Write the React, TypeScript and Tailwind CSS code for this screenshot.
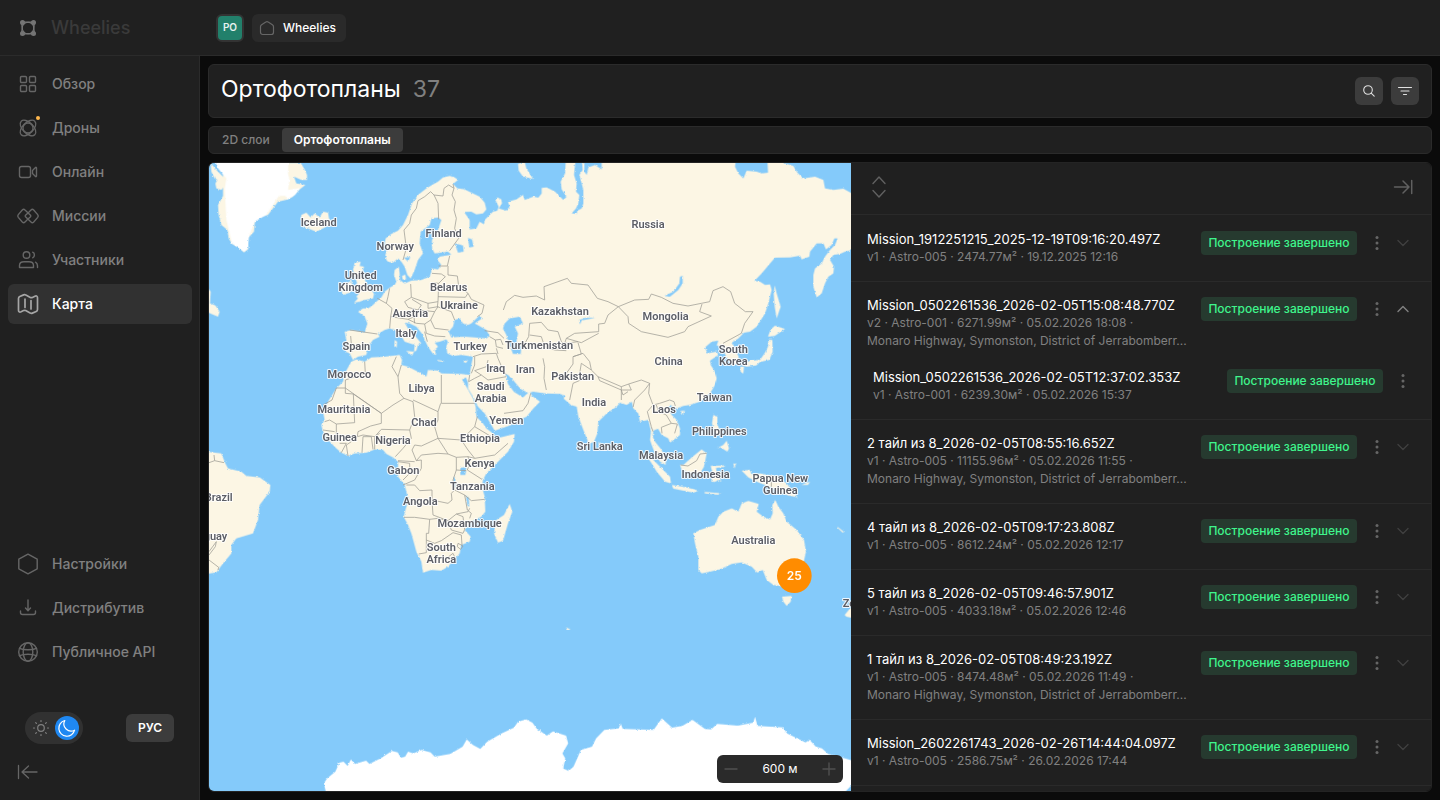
import { ReactNode, useState } from 'react';

/* ---------- icons ---------- */

function Icon({ size = 24, width = 1.4, children }: { size?: number; width?: number; children: ReactNode }) {
  return (
    <svg
      width={size}
      height={size}
      viewBox={`0 0 ${size} ${size}`}
      fill="none"
      stroke="currentColor"
      strokeWidth={width}
      strokeLinecap="round"
      strokeLinejoin="round"
      className="shrink-0"
      aria-hidden="true"
    >
      {children}
    </svg>
  );
}

const icons = {
  overview: (
    <Icon>
      <rect x="4.500" y="4.500" width="6" height="6" rx="1" />
      <rect x="13.500" y="4.500" width="6" height="6" rx="1" />
      <rect x="4.500" y="13.500" width="6" height="6" rx="1" />
      <rect x="13.500" y="13.500" width="6" height="6" rx="1" />
    </Icon>
  ),
  drones: (
    <Icon width={1.3}>
      <circle cx="12" cy="12" r="5" />
      <ellipse cx="12" cy="12" rx="9.600" ry="5.400" transform="rotate(45 12 12)" />
      <ellipse cx="12" cy="12" rx="9.600" ry="5.400" transform="rotate(-45 12 12)" />
    </Icon>
  ),
  online: (
    <Icon>
      <rect x="3.500" y="6.500" width="11" height="11" rx="2" />
      <path d="M16.500 10.500l3-3c.4-.4 1-.1 1 .4v8.200c0 .5-.6.8-1 .4l-3-3z" />
    </Icon>
  ),
  missions: (
    <Icon>
      <path d="M12 9l3-3c1-1 1.700-1 2.700 0l4 4.600c.8 1 .8 1.800 0 2.800l-4 4.600c-1 1-1.700 1-2.700 0l-5.500-5.200c-.5-.6-.5-1 0-1.600L12 9z" />
      <path d="M12 15l-3 3c-1 1-1.700 1-2.700 0l-4-4.600c-.8-1-.8-1.800 0-2.800L6.300 6c1-1 1.700-1 2.700 0l5.500 5.200c.5.6.5 1 0 1.600L12 15z" />
    </Icon>
  ),
  members: (
    <Icon>
      <circle cx="10.500" cy="7" r="3.300" />
      <path d="M3.500 19.500v-2c0-2.500 2-3.700 4.500-3.700h5c2.500 0 4.500 1.200 4.500 3.700v2z" />
      <path d="M16.700 4.200c2.300 1 2.300 4.600 0 5.600M19.500 14.200c1.400.7 2 2 2 3.600v1.700" />
    </Icon>
  ),
  map: (
    <Icon width={1.7}>
      <path d="M2.500 6.500c0-1 .4-1.600 1.300-2L7.600 2.900c.9-.4 1.500-.3 2.300.2l4.400 2.300c.8.4 1.300.4 2.100 0l2.500-1.200c1.600-.7 2.600 0 2.600 1.500v11.800c0 1-.4 1.600-1.300 2l-3.800 1.600c-.9.4-1.500.3-2.300-.2L9.700 18.600c-.8-.4-1.300-.4-2.100 0l-2.500 1.200c-1.600.7-2.600 0-2.600-1.500z" />
      <path d="M9 7v8.500M15 8.500V17" />
    </Icon>
  ),
  settings: (
    <Icon>
      <path d="M12 2.200l9.200 5v9.600l-9.200 5-9.200-5V7.200z" />
    </Icon>
  ),
  download: (
    <Icon>
      <path d="M12 4v10M9.500 12l2.500 2.700 2.500-2.700" />
      <path d="M4.500 15v1.500a2 2 0 0 0 2 2h11a2 2 0 0 0 2-2V15" />
    </Icon>
  ),
  globe: (
    <Icon>
      <circle cx="12" cy="12" r="9.300" />
      <ellipse cx="12" cy="12" rx="4.800" ry="9.300" />
      <path d="M3.500 8.300c4.500 2 12.500 2 17 0M3.500 15.700c4.500-2 12.500-2 17 0" />
    </Icon>
  ),
};

/* ---------- map ---------- */

const eurafrica =
  'M535 300L532 285 538 268 530 250 533 235 550 222 570 212 585 195 600 165 612 130 630 105 655 85 680 70 690 65 705 52 725 48 740 52 750 60 735 72 748 85 770 88 790 98 815 110 830 128 835 148 825 160 805 163 790 155 768 156 785 180 785 208 805 205 815 185 828 193 830 180 845 165 855 155 868 152 872 140 862 120 868 112 880 118 882 130 872 145 895 152 905 140 900 125 925 118 945 105 950 120 976 110 991 113 1001 100 1001 84 1016 82 1041 95 1066 120 1076 110 1061 88 1058 65 1071 40 1074 -10' +
  'L1710 -10 1726 9 1756 18 1768 38 1786 55 1821 50 1846 60 1851 85 1876 90 1906 86 1940 105 1940 268 1911 275 1896 282 1876 285 1866 300 1878 320 1876 340 1861 350 1851 370 1841 400 1826 412 1816 380 1816 345 1821 325 1841 310 1851 290 1866 270 1881 255 1889 235 1879 235 1871 255 1854 268 1846 250 1826 250 1806 275 1804 290 1781 298 1776 287 1746 292 1701 293 1686 310 1661 340 1639 363 1656 365 1671 375 1686 373 1691 390 1681 430 1671 460 1646 500 1626 515 1608 518 1591 535 1571 548 1582 570 1592 590 1590 610 1574 616 1560 600 1550 580 1545 562 1526 556 1531 542 1511 545 1491 562 1498 580 1526 575 1531 585 1506 602 1508 615 1521 635 1526 655' +
  'L1521 675 1506 700 1476 725 1446 735 1426 738 1406 745 1386 735 1380 745 1391 765 1406 780 1416 805 1416 825 1386 848 1381 835 1361 825 1350 806 1336 812 1334 830 1341 845 1361 870 1373 900 1373 915 1356 905 1341 880 1331 855 1326 840 1329 815 1321 780 1296 785 1291 760 1276 745 1271 725 1256 735 1236 728 1226 740 1196 760 1171 785 1168 820 1158 845 1143 852 1126 810 1111 770 1106 740 1088 735 1081 728 1066 715 1072 708 1056 702 1011 700 976 695 961 699 940 688 930 678 915 660 900 645 892 642 900 672 918 696 945 712 965 694 972 708 996 725 976 745 956 770 936 778 910 795 860 812 850 795 830 760 810 740 795 710 780 685 780 668 774 652' +
  'L762 658 775 680 795 715 803 740 805 770 825 790 835 805 855 820 865 835 920 822 918 845 900 875 870 905 835 940 825 960 822 980 830 1010 832 1055 820 1070 790 1085 770 1110 788 1130 785 1145 760 1155 755 1180 720 1220 700 1232 670 1230 645 1238 640 1205 625 1175 610 1120 600 1095 587 1070 595 1040 600 1015 590 975 570 950 570 905 555 892 535 882 525 870 500 868 475 878 440 880 420 888 400 878 385 865 365 845 345 815 340 795 350 780 345 755 360 725 385 685 405 665 410 640 430 605 445 598 470 605 490 592 530 590 575 585 582 600 580 615 600 620 640 640 655 650 660 630 690 632 700 640 760 642 785 645 790 615 795 590 760 585 735 588 718 580 715 560 720 545' +
  'L715 538 695 545 680 548 690 560 680 570 685 585 675 582 660 560 650 540 645 525 625 500 605 490 590 488 600 505 615 520 640 550 630 555 625 572 618 575 620 555 590 545 575 520 560 510 545 505 530 510 510 522 515 530 495 540 480 560 475 585 450 590 435 600 425 580 413 575 415 540 410 515 430 510 470 517 478 490 470 470 450 455 465 445 480 445 495 435 505 425 520 412 530 395 545 383 560 375 565 365 558 345 560 330 572 320 575 340 575 360 590 370 610 362 640 360 665 350 670 335 670 325 690 328 700 315 688 300 695 290 730 284 720 275 680 280 672 265 672 240 690 210 700 180 690 172 670 175 665 195 638 215 635 250 645 280 630 300 620 330 608 355 598 345 590 320 580 305 570 295 555 308 540 305Z';

const islands = [
  // greenland coast
  'M8 9L25 30 45 50 52 65 48 80 40 90 25 85 22 70 28 60 20 55 10 35Z',
  'M45 9V108L30 135 32 165 40 195 58 210 62 235 72 252 90 262 108 277 120 268 122 232 138 215 140 190 145 175 180 165 210 125 240 118 255 110 275 88 292 75 265 70 258 50 280 60 297 60 297 45 290 28 278 9Z',
  'M280 165L295 158 308 172 320 160 335 172 345 155 360 158 363 175 372 188 355 200 325 215 300 205 284 202 298 190 278 180Z',
  'M440 308L458 305 455 318 468 320 460 345 472 362 478 378 492 392 498 402 495 415 470 420 455 425 438 428 450 415 445 410 455 398 440 385 447 368 440 350 435 330Z',
  'M405 375L430 362 434 385 425 398 405 405 400 390Z',
  'M930 12L950 5 955 25 975 57 945 50 932 32Z',
  'M582 348L592 344 594 358 584 358Z',
  'M560 540L567 545 566 562 559 560Z',
  'M594 573L618 575 612 587Z',
  'M688 600L708 603 706 606 688 603Z',
  'M765 605L780 600 774 609Z',
  // south america and newfoundland
  'M-5 875L40 880 52 910 60 925 100 935 115 948 155 952 187 975 185 995 155 1035 150 1080 135 1120 110 1128 85 1135 70 1155 70 1180 45 1210 25 1237 -5 1242Z',
  'M-5 378L8 395 6 430 22 436 35 455 30 470 10 462 -5 455Z',
  'M905 1032L913 1055 900 1090 885 1142 870 1148 858 1120 865 1080 888 1065Z',
  // japan and sakhalin
  'M1700 376L1706 400 1718 440 1706 475 1700 440 1697 400Z',
  'M1701 497L1731 507 1711 520 1700 528 1680 530 1688 508Z',
  'M1681 540L1693 540 1694 575 1684 600 1656 606 1645 616 1616 620 1600 615 1626 602 1656 600 1671 578 1680 560Z',
  'M1597 620L1608 620 1606 640 1598 636Z',
  'M1599 626L1606 620 1604 642Z',
  // south-east asia
  'M1415 754L1431 751 1423 765Z',
  'M1516 765L1528 770 1528 795 1536 810 1546 825 1521 822 1512 790Z',
  'M1526 865L1546 855 1556 842 1563 865 1558 875 1538 862Z',
  'M1316 888L1336 900 1356 920 1386 950 1389 970 1371 965 1346 935 1331 910Z',
  'M1391 975L1436 982 1471 992 1456 998 1396 986Z',
  'M1490 996L1540 1000 1530 1004 1490 1000Z',
  'M1416 915L1426 915 1451 892 1481 868 1496 880 1488 920 1476 940 1446 938 1421 930Z',
  'M1508 918L1550 916 1550 920 1524 924 1526 936 1540 934 1532 944 1540 966 1530 960 1522 966 1510 965 1514 940Z',
  'M1576 910L1584 912 1580 925Z',
  'M1601 932L1626 930 1631 945 1656 940 1706 950 1736 970 1751 990 1769 1012 1736 1005 1706 990 1671 975 1646 965 1621 952Z',
  'M1780 975L1806 965 1800 975Z',
  'M1171 845L1181 855 1176 868Z',
  // australia and around
  'M1456 1120L1476 1110 1521 1095 1531 1070 1546 1055 1571 1045 1591 1055 1601 1030 1621 1023 1652 1032 1646 1055 1666 1070 1686 1078 1694 1060 1693 1035 1702 1020 1711 1040 1726 1060 1736 1085 1766 1110 1788 1140 1794 1175 1786 1210 1766 1250 1731 1280 1696 1275 1676 1260 1664 1230 1648 1238 1631 1220 1601 1207 1571 1212 1536 1228 1506 1235 1481 1240 1471 1230 1471 1190 1461 1150Z',
  'M1722 1310L1751 1308 1748 1325 1736 1338 1726 1325Z',
  'M1910 1365L1926 1345 1940 1335 1940 1375 1915 1370Z',
  'M1888 1100L1908 1116 1904 1118 1889 1104Z',
  'M1074 1402L1088 1408 1076 1409Z',
];

const waters = [
  'M1103 -5H1121L1124 30 1114 45 1121 70 1126 90 1126 130 1121 145 1108 152 1106 162 1091 160 1104 145 1111 130 1114 105 1104 95 1106 70 1098 45Z',
  'M1129 -5H1181V28L1161 15 1141 22 1136 45 1129 35Z',
  'M1584 -5H1678L1680 38 1661 40 1646 35 1616 32 1606 55 1591 40 1581 20Z',
  'M740 480L755 475 765 490 780 495 790 490 815 466 822 475 800 490 835 510 845 528 835 535 800 532 770 530 730 532 722 515 735 500Z',
  'M890 490L905 475 935 470 945 490 920 500 930 520 925 545 940 560 938 582 915 582 905 555 895 525 885 505Z',
  'M1424 348L1424 370 1411 390 1386 410 1369 408 1396 395 1414 370 1416 350Z',
  'M1161 474L1121 481 1116 493 1113 480 1136 473Z',
  'M740 250L765 256 767 275 750 278Z',
  'M780 234L792 238 797 260 784 262Z',
  'M588 293L607 291 600 305Z',
  'M757 924L775 921 772 945 757 945Z',
  'M774 1006L782 1012 784 1040 778 1036Z',
  'M736 950L742 955 742 985 738 980Z',
];

const borders = [
  // scandinavia and the baltics
  'M585 300L595 265 588 210 605 190 610 165 625 145 630 122 650 110 668 95 678 105 705 108 708 85 722 75 738 85 735 72',
  'M678 105L690 130 692 178',
  'M738 85L732 105 742 125 738 150 745 175 740 205 752 235 725 272',
  'M725 288L718 318 692 318M720 318L720 345M672 340L700 342 712 350 692 370 672 368M720 345L748 348 752 378 780 400 772 412 690 410',
  // europe
  'M608 372L610 412 590 425 600 442 630 450 640 435 612 418M610 412L660 430 690 425 692 370M660 430L660 445 690 440 680 455 630 450M545 385L540 410 535 430 552 445 548 470 600 478 620 470M508 415L535 430M548 470L545 505M428 528L432 575M425 510L508 522M690 425L688 440 730 455 740 480M680 455L668 480 680 505 722 510M780 400L790 418 828 435 822 460 808 470M600 478L625 490 650 492 655 520 680 528 712 530M620 490L618 470M650 492L668 480M650 515L658 545',
  // caucasus and kazakhstan
  'M830 512L870 518 888 535M845 530L862 540 878 538 885 555M862 540L865 560 885 565M886 450L895 425 920 406 945 412 985 408 1010 420 1008 380 1078 355 1090 370 1140 375 1168 415 1200 425 1231 440',
  'M1231 440L1200 465 1190 490 1172 492 1172 515 1100 520 1075 535M945 560L962 530 965 490 1000 487 1020 510 1050 515 1060 545 1080 560M965 525L1000 530 1010 560 1040 570 1075 572M1172 520L1120 548 1075 535 1070 550 1110 545M1110 548L1120 582 1095 590 1095 612 1075 640M1005 595L1010 620 1008 655 1015 690',
  'M1231 440L1280 420 1322 418 1330 402 1360 412 1395 430 1440 438 1480 430 1505 425 1515 392 1545 380 1568 395 1580 430 1612 455 1635 455 1610 490 1600 520 1545 550',
  'M1231 440L1260 470 1262 490 1300 515 1380 532 1430 515 1440 500 1510 468 1475 455 1482 432',
  // south and south-east asia
  'M1095 590L1125 580 1145 605 1150 630 1170 650 1240 680 1262 672 1300 660 1325 670 1310 690 1280 720 1275 742M1170 650L1175 662 1240 690 1245 705 1260 695M1240 680L1240 720M1262 672L1270 690 1240 690M1150 630L1120 610 1115 640 1130 655 1095 670 1085 720M1325 670L1322 700 1335 735 1318 755 1330 800 1335 815M1335 735L1355 730 1385 720 1398 725 1402 738M1345 735L1352 755 1375 765 1390 790 1360 802 1362 820M1390 790L1408 792 1400 820',
  'M1418 915L1440 918 1466 902 1476 882 1496 880M1690 945V980M1345 872L1352 880',
  // middle east
  'M795 590L820 582 865 580 870 595 885 630 895 645M800 590L800 615 790 640M800 632L835 620 840 600M800 632L820 645 840 660 895 650M785 645L782 665 800 655 820 645M865 565L870 582M888 760L945 752 960 730 968 700',
  // north africa
  'M470 605L472 640 412 660 412 684 385 684 372 720 345 735M412 684L520 760 555 735 588 715 575 700 570 650 552 620 565 590M580 615L570 650M412 684L412 700 436 702 440 788 385 792 365 780 350 785M436 702L520 760 520 790 488 798 450 815 448 830M588 715L615 725 620 770 605 810 520 808 500 830M615 720L690 755 690 780 680 800 690 835 640 858 620 855M700 645V730H800M698 730L690 755',
  'M345 810L380 815M350 830L370 840 385 820 385 792M400 878L415 850 395 850M420 888L415 855 430 845M462 878L465 830 490 830 495 868M500 868V832M448 830L465 825 500 830 515 820M605 810L610 835 585 865 562 890M620 855L612 870 625 902 640 885 690 880 720 882 690 835M570 902L620 905M690 835L760 840 800 800 808 770M800 800L850 830M760 840L780 870 800 895 860 885 900 850M720 882L745 892 780 890 800 895M780 890L785 910 778 930 822 958M745 892L745 930 735 960 740 990 730 1000 732 1020 720 1030 672 1020 672 990 635 992 620 975 595 975M625 902L640 900 640 925 620 960 585 975M570 905L605 910 605 940 585 960M745 930L775 932M740 990L770 1005 790 1022 830 1018M672 1020L675 1065 720 1082 745 1062 780 1055 785 1045M770 1005L778 1050 790 1060 785 1075',
  // south of africa
  'M588 1072L620 1072 665 1078 690 1075 720 1082 730 1110 765 1120 770 1108 765 1070 745 1062M665 1078L662 1120 655 1120 655 1178 632 1182M655 1140L680 1150 700 1142 735 1118 760 1125 762 1155M750 1150L765 1158 758 1168 748 1160ZM722 1190L735 1180 742 1195 728 1202Z',
  // south america
  'M3 908L20 902 18 885M20 902L48 908M3 1175L25 1145 22 1160 3 1185M3 1200L32 1222 30 1230',
];

const antarctica =
  'M288 310L282 280 290 265 310 245 320 218 330 215 340 228 348 208 358 222 385 212 393 222 420 205 448 183 462 187 470 203 480 200 487 185 500 190 520 180 542 187 552 200 590 192 620 170 630 148 645 165 663 177 680 155 715 130 745 113 755 95 775 88 790 98 800 115 825 137 840 124 872 137 877 160 863 190 870 205 865 235 878 243 890 230 908 180 935 170 945 145 965 120 1000 115 1005 100 1010 117 1050 118 1085 120 1105 85 1130 113 1155 108 1180 90 1210 117 1225 118 1240 102 1290 107 1328 98 1332 80 1338 108 1400 112 1410 130 1455 157 1465 150 1480 170 1495 175 1510 192 1545 203 1570 212 1570 282 1548 310Z';

type Label = [string, number, number, ('start' | 'end')?];

const labels: Label[] = [
  ['Iceland', 332, 188],
  ['Norway', 562, 261],
  ['Finland', 707, 222],
  ['Russia', 1320, 194],
  ['United', 458, 346],
  ['Kingdom', 458, 382],
  ['Belarus', 722, 383],
  ['Ukraine', 753, 437],
  ['Austria', 607, 461],
  ['Italy', 594, 522],
  ['Spain', 445, 559],
  ['Turkey', 787, 559],
  ['Turkmenistan', 993, 558],
  ['Kazakhstan', 1056, 455],
  ['Mongolia', 1373, 471],
  ['China', 1382, 605],
  ['South', 1576, 570],
  ['Korea', 1576, 606],
  ['Iraq', 863, 625],
  ['Iran', 952, 629],
  ['Pakistan', 1094, 651],
  ['India', 1158, 728],
  ['Saudi', 848, 680],
  ['Arabia', 848, 716],
  ['Morocco', 424, 645],
  ['Libya', 641, 687],
  ['Mauritania', 408, 748],
  ['Chad', 648, 788],
  ['Yemen', 895, 783],
  ['Ethiopia', 816, 836],
  ['Guinea', 395, 833],
  ['Nigeria', 555, 842],
  ['Kenya', 815, 912],
  ['Gabon', 586, 932],
  ['Tanzania', 793, 980],
  ['Angola', 637, 1026],
  ['Mozambique', 785, 1092],
  ['South', 700, 1163],
  ['Africa', 700, 1199],
  ['Brazil', 74, 1012, 'end'],
  ['Paraguay', 58, 1129, 'end'],
  ['Sri Lanka', 1175, 859],
  ['Laos', 1368, 750],
  ['Taiwan', 1519, 714],
  ['Philippines', 1534, 814],
  ['Malaysia', 1359, 886],
  ['Indonesia', 1493, 945],
  ['Papua New', 1717, 955],
  ['Guinea', 1717, 991],
  ['Australia', 1636, 1142],
  ['Zealand', 1904, 1331, 'start'],
];

function WorldMap() {
  return (
    <svg
      viewBox="3 9 1926 1884"
      preserveAspectRatio="xMinYMin slice"
      className="absolute inset-0 h-full w-full bg-[#84cafa]"
      role="img"
      aria-label="Карта мира"
    >
      <defs>
        <filter id="coast" filterUnits="userSpaceOnUse" x="-20" y="-20" width="1980" height="1940">
          <feTurbulence type="fractalNoise" baseFrequency="0.15" numOctaves="2" seed="4" />
          <feDisplacementMap in="SourceGraphic" scale="7" xChannelSelector="R" yChannelSelector="G" />
        </filter>
      </defs>
      <g filter="url(#coast)">
        <g fill="#fcf6e4">
          <path d={eurafrica} />
          {islands.map((d) => (
            <path key={d} d={d} />
          ))}
        </g>
        <path
          fill="#fff"
          d="M18 -5L30 25 55 55 50 85 55 180 72 250 108 275 120 265 122 232 140 185 175 165 205 120 213 108 232 108 238 118 262 104 276 84 240 90 245 60 240 40 242 -5Z"
        />
        <g fill="#84cafa">
          {waters.map((d) => (
            <path key={d} d={d} />
          ))}
        </g>
        <g transform="translate(0 1590) scale(1.232 1)">
          <path fill="#fff" d={antarctica} />
        </g>
      </g>
      <g fill="none" stroke="#a09e96" strokeWidth="2.300" strokeLinejoin="round">
        {borders.map((d) => (
          <path key={d} d={d} />
        ))}
      </g>
      <g
        className="font-['Roboto',sans-serif] font-semibold"
        fontSize="33"
        fill="#5c5e66"
        stroke="#fff"
        strokeOpacity="0.85"
        strokeWidth="6"
        strokeLinejoin="round"
        paintOrder="stroke"
      >
        {labels.map(([text, x, y, anchor]) => (
          <text key={`${text}${x}`} x={x} y={y + 10} textAnchor={anchor ?? 'middle'}>
            {text}
          </text>
        ))}
      </g>
      <circle cx="1759" cy="1247" r="52" fill="#ff8c00" />
      <text
        x="1759"
        y="1260"
        textAnchor="middle"
        fontSize="36"
        fill="#fff"
        className="font-['Inter',sans-serif] font-semibold"
      >
        25
      </text>
    </svg>
  );
}

/* ---------- sidebar ---------- */

const mainNav = [
  { label: 'Обзор', icon: icons.overview },
  { label: 'Дроны', icon: icons.drones, dot: true },
  { label: 'Онлайн', icon: icons.online },
  { label: 'Миссии', icon: icons.missions },
  { label: 'Участники', icon: icons.members },
  { label: 'Карта', icon: icons.map, active: true },
];

const extraNav = [
  { label: 'Настройки', icon: icons.settings },
  { label: 'Дистрибутив', icon: icons.download },
  { label: 'Публичное API', icon: icons.globe },
];

type NavItem = { label: string; icon: ReactNode; dot?: boolean; active?: boolean };

function NavLink({ label, icon, dot, active }: NavItem) {
  return (
    <a
      href="#"
      aria-current={active ? 'page' : undefined}
      className={
        active
          ? 'flex h-10 items-center gap-3 rounded-md bg-[#313131] px-2 text-sm font-medium text-white'
          : 'flex h-10 items-center gap-3 rounded-md px-2 text-sm font-medium text-[#808080]'
      }
    >
      <span className={active ? 'relative text-[#a6a6a6]' : 'relative text-[#666666]'}>
        {icon}
        {dot && <span className="absolute top-0 right-0 size-1 rounded-full bg-[#ffb84d]" />}
      </span>
      {label}
    </a>
  );
}

function Sidebar() {
  const [dark, setDark] = useState(true);

  return (
    <aside className="flex w-[200px] shrink-0 flex-col border-r border-[#2b2b2b] bg-[#202020] pt-2 pr-[7px] pb-4 pl-2">
      <nav className="flex flex-col gap-1">
        {mainNav.map((item) => (
          <NavLink key={item.label} {...item} />
        ))}
      </nav>
      <nav className="mt-auto flex flex-col gap-1">
        {extraNav.map((item) => (
          <NavLink key={item.label} {...item} />
        ))}
      </nav>
      <div className="mt-10 flex items-center justify-between pr-[18px] pl-[17px]">
        <button
          type="button"
          aria-label="Тема"
          aria-pressed={dark}
          onClick={() => setDark(!dark)}
          className="flex h-8 w-[58px] items-center justify-between rounded-full bg-[#313131] px-1 text-[#808080]"
        >
          <Icon width={1.2}>
            <circle cx="12" cy="12" r="3.300" />
            <path d="M12 4.500v1M12 18.500v1M4.500 12h1M18.500 12h1M6.700 6.700l.7.7M16.600 16.600l.7.7M6.700 17.300l.7-.7M16.600 7.400l.7-.7" />
          </Icon>
          <span className="flex size-6 items-center justify-center rounded-full bg-[#1f88f2] text-white">
            <Icon width={1.2}>
              <path d="M9.800 4.500A8 8 0 1 0 19.600 14.200 7.200 7.200 0 0 1 9.800 4.500z" />
            </Icon>
          </span>
        </button>
        <button type="button" className="h-7 w-12 rounded-md bg-[#3c3c3c] text-xs font-semibold text-white">
          РУС
        </button>
      </div>
      <button type="button" aria-label="Свернуть меню" className="mt-4 ml-2 self-start text-[#666666]">
        <Icon width={1.3}>
          <path d="M2.500 5.500v13M21 12H6M12.500 6L6 12l6.500 6" />
        </Icon>
      </button>
    </aside>
  );
}

/* ---------- orthophoto list ---------- */

type Ortho = { title: string; meta: string; address?: string; child?: Ortho };

const address = 'Monaro Highway, Symonston, District of Jerrabomberr...';

const orthos: Ortho[] = [
  {
    title: 'Mission_1912251215_2025-12-19T09:16:20.497Z',
    meta: 'v1 · Astro-005 · 2474.77м² · 19.12.2025 12:16',
  },
  {
    title: 'Mission_0502261536_2026-02-05T15:08:48.770Z',
    meta: 'v2 · Astro-001 · 6271.99м² · 05.02.2026 18:08 ·',
    address,
    child: {
      title: 'Mission_0502261536_2026-02-05T12:37:02.353Z',
      meta: 'v1 · Astro-001 · 6239.30м² · 05.02.2026 15:37',
    },
  },
  {
    title: '2 тайл из 8_2026-02-05T08:55:16.652Z',
    meta: 'v1 · Astro-005 · 11155.96м² · 05.02.2026 11:55 ·',
    address,
  },
  { title: '4 тайл из 8_2026-02-05T09:17:23.808Z', meta: 'v1 · Astro-005 · 8612.24м² · 05.02.2026 12:17' },
  { title: '5 тайл из 8_2026-02-05T09:46:57.901Z', meta: 'v1 · Astro-005 · 4033.18м² · 05.02.2026 12:46' },
  {
    title: '1 тайл из 8_2026-02-05T08:49:23.192Z',
    meta: 'v1 · Astro-005 · 8474.48м² · 05.02.2026 11:49 ·',
    address,
  },
  {
    title: 'Mission_2602261743_2026-02-26T14:44:04.097Z',
    meta: 'v1 · Astro-005 · 2586.75м² · 26.02.2026 17:44',
  },
];

function OrthoRow({ item, nested }: { item: Ortho; nested?: boolean }) {
  const open = Boolean(item.child);

  return (
    <div className="flex items-start">
      <div className="min-w-0 flex-1 pr-3">
        <h2 className="truncate text-[13px] leading-[18px] text-white">{item.title}</h2>
        <p className="text-xs leading-[18px] text-[#808080]">{item.meta}</p>
        {item.address && <p className="truncate text-xs leading-[18px] text-[#808080]">{item.address}</p>}
      </div>
      <div className="mt-px flex h-6 items-center">
        <span className="mr-2 flex h-6 w-[156px] items-center justify-center rounded-sm bg-[#263a2f] text-xs font-medium whitespace-nowrap text-[#3ff58c]">
          Построение завершено
        </span>
        <button type="button" aria-label="Действия" className="flex w-6 justify-center text-[#666666]">
          <svg width="4" height="16" viewBox="0 0 4 16" fill="currentColor" aria-hidden="true">
            <circle cx="2" cy="2.500" r="1.500" />
            <circle cx="2" cy="8" r="1.500" />
            <circle cx="2" cy="13.500" r="1.500" />
          </svg>
        </button>
        {!nested && (
          <button
            type="button"
            aria-label={open ? 'Свернуть' : 'Развернуть'}
            className={open ? 'flex w-7 justify-center text-[#808080]' : 'flex w-7 justify-center text-[#3f3f3f]'}
          >
            <Icon size={16}>
              <path d={open ? 'M3 10.500l5-5 5 5' : 'M3 5.500l5 5 5-5'} />
            </Icon>
          </button>
        )}
      </div>
    </div>
  );
}

function OrthoList() {
  return (
    <section className="flex w-[580px] shrink-0 flex-col overflow-hidden bg-[#202020]">
      <div className="flex h-[52px] shrink-0 items-center justify-between border-b border-[#2a2a2a] pr-4 pb-1 pl-4 text-[#606060]">
        <button type="button" aria-label="Сортировка">
          <Icon>
            <path d="M6 8.500L12 2l6 6.500M6 15.500L12 22l6-6.500" />
          </Icon>
        </button>
        <button type="button" aria-label="Скрыть список">
          <Icon width={1.5}>
            <path d="M20.700 5.500v13M3.500 12H18M12 6l6 6-6 6" />
          </Icon>
        </button>
      </div>
      <ul className="min-h-0 flex-1 overflow-hidden pt-px">
        {orthos.map((item) => (
          <li key={item.title} className="border-b border-[#2a2a2a] pt-[14px] pr-[14px] pb-[15px] pl-4">
            <OrthoRow item={item} />
            {item.child && (
              <div className="mt-[18px] ml-[6px] pr-[2px]">
                <OrthoRow item={item.child} nested />
              </div>
            )}
          </li>
        ))}
      </ul>
    </section>
  );
}

/* ---------- page ---------- */

function TopBar() {
  return (
    <header className="flex h-14 shrink-0 items-center border-b border-[#2b2b2b] bg-[#202020]">
      <a href="#" className="flex w-[216px] items-center gap-[11px] pl-4 text-lg font-medium text-[#3a3a3a]">
        <span className="text-[#757575]">
          <Icon>
            <circle cx="6.500" cy="6.500" r="2.500" fill="currentColor" stroke="none" />
            <circle cx="17.500" cy="6.500" r="2.500" fill="currentColor" stroke="none" />
            <circle cx="6.500" cy="17.500" r="2.500" fill="currentColor" stroke="none" />
            <circle cx="17.500" cy="17.500" r="2.500" fill="currentColor" stroke="none" />
            <circle cx="12" cy="12" r="5.800" strokeWidth="1.200" />
            <path
              strokeWidth="1.200"
              d="M6.500 5.500c3.500 1 7.500 1 11 0M6.500 18.500c3.500-1 7.500-1 11 0M5.500 6.500c1 3.500 1 7.500 0 11M18.500 6.500c-1 3.500-1 7.500 0 11"
            />
          </Icon>
        </span>
        Wheelies
      </a>
      <div className="flex items-center gap-2">
        <button
          type="button"
          className="size-7 rounded-md border-2 border-[#333333] bg-[#22806b] text-[10px] font-semibold text-[#e6f2ef]"
        >
          PO
        </button>
        <button
          type="button"
          className="flex h-7 items-center gap-2 rounded-md bg-[#2a2a2a] pr-[10px] pl-[7px] text-xs font-medium text-white"
        >
          <span className="text-[#666666]">
            <Icon size={16} width={1.2}>
              <path d="M1.500 6.800c0-1 .3-1.600 1.100-2.100L6.800 2c.8-.6 1.600-.6 2.400 0l4.200 2.700c.8.5 1.100 1.100 1.100 2.100v5.400c0 1.500-.8 2.300-2.300 2.300H3.800c-1.500 0-2.300-.8-2.300-2.300z" />
            </Icon>
          </span>
          Wheelies
        </button>
      </div>
    </header>
  );
}

export default function App() {
  return (
    <div className="flex h-screen flex-col bg-[#0b0b0b] font-['Inter','Noto_Sans',sans-serif]">
      <TopBar />
      <div className="flex min-h-0 flex-1">
        <Sidebar />
        <main className="flex min-w-0 flex-1 flex-col gap-2 p-2">
          <div className="flex h-[54px] shrink-0 items-center justify-between rounded-md border border-[#2b2b2b] bg-[#202020] px-3">
            <h1 className="flex gap-3 pb-1 text-[23px] leading-8 text-white">
              Ортофотопланы <span className="text-[#808080]">37</span>
            </h1>
            <div className="flex gap-2">
              <button
                type="button"
                aria-label="Поиск"
                className="flex size-7 items-center justify-center rounded-md bg-[#3c3c3c] text-[#e0e0e0]"
              >
                <Icon size={16} width={1.1}>
                  <circle cx="7" cy="7" r="4.300" />
                  <path d="M10.200 10.200l3 3" />
                </Icon>
              </button>
              <button
                type="button"
                aria-label="Фильтр"
                className="flex size-7 items-center justify-center rounded-md bg-[#3c3c3c] text-[#e0e0e0]"
              >
                <Icon size={16} width={1.1}>
                  <path d="M1.500 4.500h13M4 8h8M6.500 11.500h3" />
                </Icon>
              </button>
            </div>
          </div>

          <div className="flex h-7 shrink-0 items-center rounded-md border border-[#2b2b2b] bg-[#202020] px-px text-xs font-medium">
            <button type="button" className="h-6 px-3 text-[#808080]">
              2D слои
            </button>
            <button type="button" className="h-6 rounded-sm bg-[#3c3c3c] px-3 font-semibold text-white">
              Ортофотопланы
            </button>
          </div>

          <div className="flex min-h-0 flex-1 overflow-hidden rounded-md border border-[#242424]">
            <div className="relative min-w-0 flex-1 overflow-hidden">
              <WorldMap />
              <div className="absolute right-2 bottom-2 flex h-7 w-[126px] items-center justify-between rounded-md bg-[#2a2a2a] px-[6px] text-xs text-white">
                <button type="button" aria-label="Отдалить" className="text-[#505050]">
                  <Icon size={16}>
                    <path d="M2 8h12" />
                  </Icon>
                </button>
                600 м
                <button type="button" aria-label="Приблизить" className="text-[#505050]">
                  <Icon size={16}>
                    <path d="M2 8h12M8 2v12" />
                  </Icon>
                </button>
              </div>
            </div>
            <OrthoList />
          </div>
        </main>
      </div>
    </div>
  );
}
